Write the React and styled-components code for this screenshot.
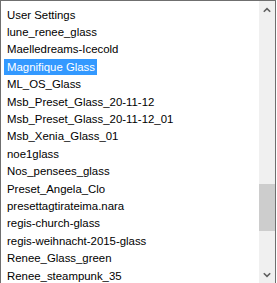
import React from "react";
import styled, { createGlobalStyle } from "styled-components";

const Global = createGlobalStyle`
  html, body { margin: 0; padding: 0; background: #ffffff; }
  body { overflow: hidden; }
`;

const ListBox = styled.div`
  box-sizing: border-box;
  width: 276px;
  height: 284px;
  border: 1px solid #6f6f6f;
  background: #ffffff;
  display: flex;
  flex-direction: row;
  overflow: hidden;
`;

const Items = styled.ul`
  list-style: none;
  margin: 0;
  padding: 5px 0 0 3px;
  flex: 1;
  overflow: hidden;
  font-family: "Liberation Sans", Arial, sans-serif;
  font-size: 11.4px;
  color: #000000;
`;

const Item = styled.li`
  height: 17.4px;
  display: flex;
  align-items: center;
`;

const Label = styled.span`
  padding: 0 2px 0 3px;
  line-height: 16px;
  white-space: nowrap;
  background: ${(p) => (p.$selected ? "#3399ff" : "transparent")};
  color: ${(p) => (p.$selected ? "#ffffff" : "#000000")};
`;

const ScrollBar = styled.div`
  width: 16px;
  background: #f0f0f0;
  display: flex;
  flex-direction: column;
`;

const ArrowButton = styled.div`
  height: 17px;
  display: flex;
  align-items: center;
  justify-content: center;
  flex: none;
`;

const Track = styled.div`
  flex: 1;
  display: flex;
  flex-direction: column;
`;

const Thumb = styled.div`
  height: 47px;
  background: #cdcdcd;
  flex: none;
`;

const Chevron = ({ up }) => (
  <svg width="8" height="6" viewBox="0 0 8 6">
    <polyline
      points={up ? "0.8,4.8 4,1.6 7.2,4.8" : "0.8,1.2 4,4.4 7.2,1.2"}
      fill="none"
      stroke="#606060"
      strokeWidth="1.6"
    />
  </svg>
);

const entries = [
  "User Settings",
  "lune_renee_glass",
  "Maelledreams-Icecold",
  "Magnifique Glass",
  "ML_OS_Glass",
  "Msb_Preset_Glass_20-11-12",
  "Msb_Preset_Glass_20-11-12_01",
  "Msb_Xenia_Glass_01",
  "noe1glass",
  "Nos_pensees_glass",
  "Preset_Angela_Clo",
  "presettagtirateima.nara",
  "regis-church-glass",
  "regis-weihnacht-2015-glass",
  "Renee_Glass_green",
  "Renee_steampunk_35",
];

const selected = "Magnifique Glass";
const thumbOffset = 166;

export default function App() {
  return (
    <>
      <Global />
      <ListBox>
        <Items>
          {entries.map((e) => (
            <Item key={e}>
              <Label $selected={e === selected}>{e}</Label>
            </Item>
          ))}
        </Items>
        <ScrollBar>
          <ArrowButton>
            <Chevron up />
          </ArrowButton>
          <Track>
            <Thumb style={{ marginTop: thumbOffset }} />
          </Track>
          <ArrowButton>
            <Chevron />
          </ArrowButton>
        </ScrollBar>
      </ListBox>
    </>
  );
}
